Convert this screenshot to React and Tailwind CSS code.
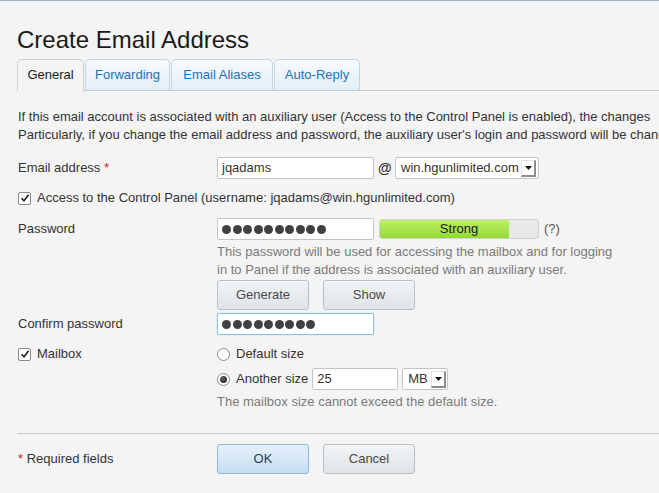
import React from "react";

const font = { fontFamily: '"Liberation Sans", Arial, sans-serif' };

function Check() {
  return (
    <span className="flex h-[13px] w-[13px] items-center justify-center rounded-[2px] border border-[#8a8a8a] bg-white">
      <svg width="10" height="10" viewBox="0 0 10 10">
        <path d="M1.5 5.2 L4 7.8 L8.6 1.8" fill="none" stroke="#222" strokeWidth="1.6" />
      </svg>
    </span>
  );
}

function Radio({ on }) {
  return (
    <span className="flex h-[13px] w-[13px] items-center justify-center rounded-full border border-[#8a8a8a] bg-white">
      {on && <span className="h-[7px] w-[7px] rounded-full bg-[radial-gradient(circle_at_35%_35%,#666,#111)]" />}
    </span>
  );
}

function Dots({ n }) {
  return (
    <div className="flex gap-[1.5px] pl-[4px]">
      {Array.from({ length: n }).map((_, i) => (
        <span key={i} className="h-[9px] w-[9px] rounded-full bg-[#404040]" />
      ))}
    </div>
  );
}

function Arrow() {
  return (
    <span className="flex h-[17px] w-[15px] items-center justify-center border-b-2 border-r-2 border-b-[#8c8c8c] border-r-[#8c8c8c] border-l border-t border-l-[#e0e0e0] border-t-[#e0e0e0] bg-white">
      <svg width="7" height="4" viewBox="0 0 7 4">
        <path d="M0 0 L7 0 L3.5 4 Z" fill="#111" />
      </svg>
    </span>
  );
}

function Btn({ children, primary }) {
  return (
    <div
      className={
        "flex h-[30px] w-[92px] items-center justify-center rounded-[3px] border text-[13px] " +
        (primary
          ? "border-[#8bb8de] bg-gradient-to-b from-[#e4f0fa] to-[#c6def2] text-[#1e3e62]"
          : "border-[#b7c0c7] bg-gradient-to-b from-[#f2f4f6] to-[#dde3e7] text-[#4a4a4a]")
      }
    >
      {children}
    </div>
  );
}

export default function App() {
  const tabBase =
    "flex h-[31px] items-center justify-center rounded-t-[5px] border border-b-0 text-[13px]";
  return (
    <div
      style={font}
      className="h-[493px] w-[659px] overflow-hidden border-t border-[#9dafbd] bg-[#f4f4f4] pl-[17px] text-[13px] text-[#333]"
    >
      <h1 className="mt-[25px] h-[28px] text-[24px] leading-[28px] text-[#1a1a1a]">Create Email Address</h1>

      <div className="mt-[5px] flex w-[700px] gap-[1px] border-b border-[#c9c9c9]">
        <div className={tabBase + " relative -mb-px h-[32px] w-[67px] border-[#cfcfcf] bg-[#f4f4f4] pb-px text-[#222]"}>General</div>
        <div className={tabBase + " w-[85px] border-[#c3d5e2] bg-gradient-to-b from-[#f6fafd] to-[#e2eef7] text-[#1a73b6]"}>Forwarding</div>
        <div className={tabBase + " w-[102px] border-[#c3d5e2] bg-gradient-to-b from-[#f6fafd] to-[#e2eef7] text-[#1a73b6]"}>Email Aliases</div>
        <div className={tabBase + " w-[86px] border-[#c3d5e2] bg-gradient-to-b from-[#f6fafd] to-[#e2eef7] text-[#1a73b6]"}>Auto-Reply</div>
      </div>

      <div className="mt-[17px] whitespace-nowrap pl-px leading-[18px] text-[#333]">
        <div>If this email account is associated with an auxiliary user (Access to the Control Panel is enabled), the changes</div>
        <div>Particularly, if you change the email address and password, the auxiliary user's login and password will be changed.</div>
      </div>

      {/* Email address */}
      <div className="mt-[13px] flex h-[22px] items-center">
        <div className="w-[200px] pl-px">
          Email address <span className="text-[#d42020]">*</span>
        </div>
        <div className="flex h-[22px] w-[157px] items-center rounded-[2px] border border-[#c4c4c4] bg-white pl-[4px] text-[#333]">jqadams</div>
        <span className="ml-[4px] w-[17px] text-[14px] font-bold text-[#333]">@</span>
        <div className="flex h-[22px] w-[144px] items-center justify-between rounded-[2px] border border-[#c4c4c4] bg-white pl-[5px] pr-[2px]">
          <span>win.hgunlimited.com</span>
          <Arrow />
        </div>
      </div>

      {/* Access checkbox */}
      <div className="mt-[10px] flex h-[18px] items-center pl-px">
        <Check />
        <span className="ml-[6px]">Access to the Control Panel (username: jqadams@win.hgunlimited.com)</span>
      </div>

      {/* Password */}
      <div className="mt-[11px] flex h-[22px] items-center">
        <div className="w-[200px] pl-px">Password</div>
        <div className="flex h-[22px] w-[157px] items-center rounded-[2px] border border-[#c4c4c4] bg-white">
          <Dots n={10} />
        </div>
        <div className="relative ml-[5px] h-[20px] w-[160px] overflow-hidden rounded-[3px] border border-[#d3d3d3] bg-[#e8e8e8]">
          <div className="h-full w-[129px] bg-gradient-to-b from-[#bdf266] to-[#93d92f]" />
          <div className="absolute inset-0 flex items-center justify-center text-[13px] text-[#1a1a1a]">Strong</div>
        </div>
        <span className="ml-[5px] text-[#555]">(?)</span>
      </div>
      <div className="ml-[200px] mt-[3px] leading-[17.5px] text-[#7a7a7a]">
        <div>This password will be used for accessing the mailbox and for logging</div>
        <div>in to Panel if the address is associated with an auxiliary user.</div>
      </div>
      <div className="ml-[200px] mt-[2px] flex gap-[14px]">
        <Btn>Generate</Btn>
        <Btn>Show</Btn>
      </div>

      {/* Confirm */}
      <div className="mt-[3px] flex h-[22px] items-center">
        <div className="w-[200px] pl-px">Confirm password</div>
        <div className="flex h-[22px] w-[157px] items-center rounded-[2px] border border-[#8ec0e6] bg-white shadow-[0_0_2px_#bcdcf3]">
          <Dots n={9} />
        </div>
      </div>

      {/* Mailbox */}
      <div className="mt-[10px] flex h-[18px] items-center">
        <div className="flex w-[200px] items-center pl-px">
          <Check />
          <span className="ml-[6px]">Mailbox</span>
        </div>
        <Radio />
        <span className="ml-[6px]">Default size</span>
      </div>
      <div className="ml-[200px] mt-[5px] flex h-[22px] items-center">
        <Radio on />
        <span className="ml-[6px]">Another size</span>
        <div className="ml-[4px] flex h-[22px] w-[86px] items-center rounded-[2px] border border-[#c4c4c4] bg-white pl-[4px]">25</div>
        <div className="ml-[4px] flex h-[22px] w-[46px] items-center justify-between rounded-[2px] border border-[#c4c4c4] bg-white pl-[5px] pr-[1px]">
          <span>MB</span>
          <Arrow />
        </div>
      </div>
      <div className="ml-[200px] mt-[3px] leading-[17px] text-[#7a7a7a]">The mailbox size cannot exceed the default size.</div>

      <div className="mt-[23px] h-px w-[700px] bg-[#c9c9c9]" />

      <div className="mt-[10px] flex items-center">
        <div className="w-[200px] pl-px">
          <span className="text-[#d42020]">*</span> Required fields
        </div>
        <div className="flex gap-[14px]">
          <Btn primary>OK</Btn>
          <Btn>Cancel</Btn>
        </div>
      </div>
    </div>
  );
}
